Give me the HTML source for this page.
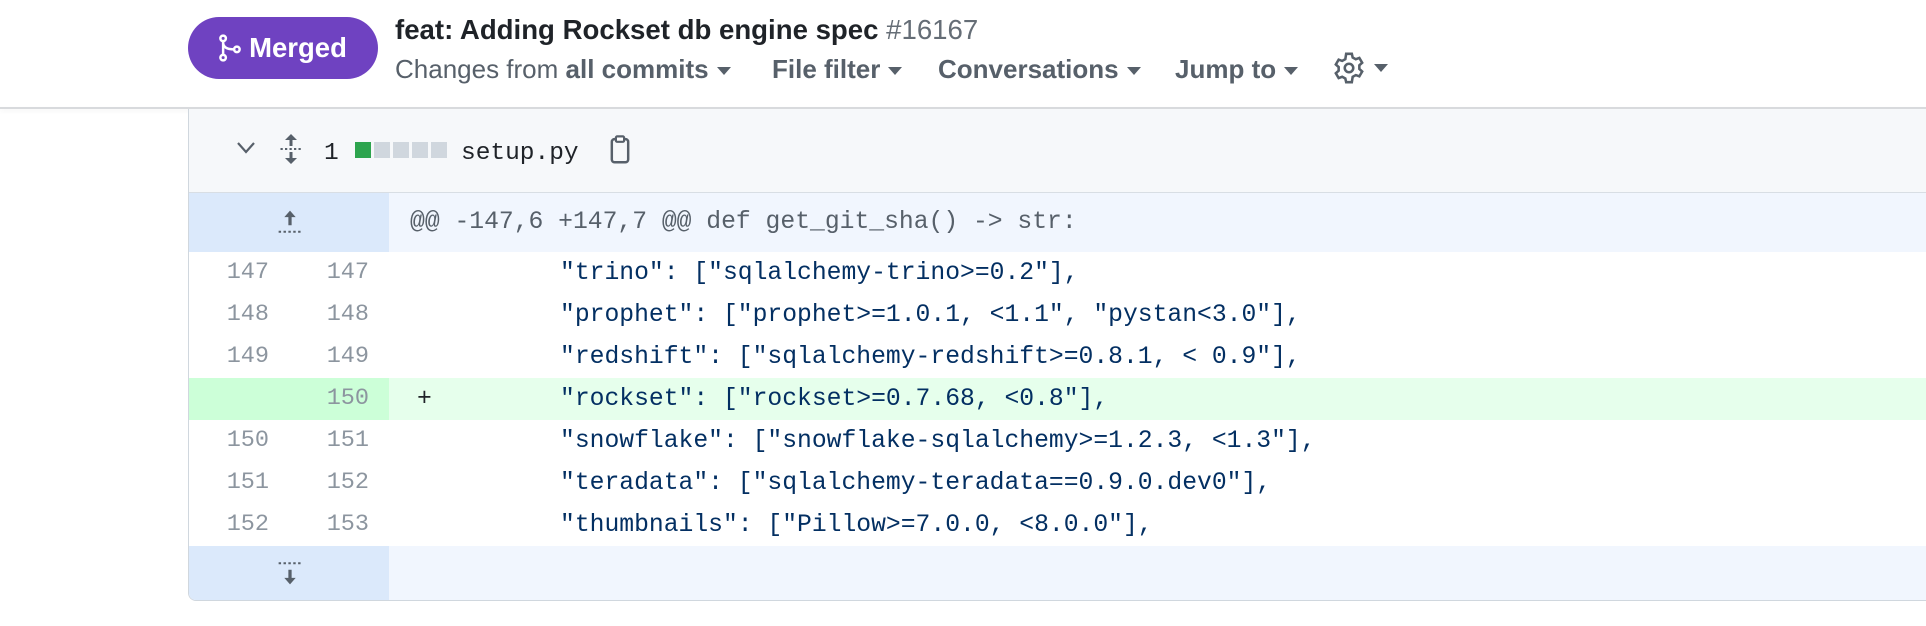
<!DOCTYPE html>
<html><head><meta charset="utf-8"><style>
*{margin:0;padding:0;box-sizing:border-box}
body{width:1926px;height:626px;background:#fff;position:relative;overflow:hidden;font-family:"Liberation Sans",sans-serif}
.a{position:absolute}
.pill{left:188px;top:17px;width:190px;height:62px;border-radius:31px;background:#6f42c1;color:#fff;font-size:27.5px;font-weight:bold;display:flex;align-items:center;justify-content:center;gap:8px}
.title{left:395px;top:14px;font-size:27.6px;font-weight:bold;color:#1f2328;white-space:nowrap}
.title span{font-weight:normal;color:#656d76}
.nav{top:54px;font-size:26px;color:#57606a;white-space:nowrap;font-weight:bold}
.nav .n{font-weight:normal}
.tri{display:inline-block;width:0;height:0;border-left:7px solid transparent;border-right:7px solid transparent;border-top:8px solid #57606a;margin-left:8px;vertical-align:middle}
.hdrline{left:0;top:107px;width:1926px;height:2px;background:#d8dadd;box-shadow:0 2px 4px rgba(0,0,0,.06)}
.box{left:188px;top:109px;width:1760px;height:492px;border:1.5px solid #d0d7de;border-top:none;border-radius:0 0 8px 8px;overflow:hidden;background:#fff}
.mono{font-family:"Liberation Mono",monospace;font-size:24.7px;white-space:pre}
.row{position:absolute;left:0;width:100%;height:42px;line-height:42px}
.ln{position:absolute;top:0;width:60px;text-align:right;color:#8c959f;font-size:23.5px}
.code{position:absolute;top:0;left:371px;color:#032f62}
</style></head><body>
<div class="a pill"><svg width="22" height="28" viewBox="0 0 16 20"><g fill="none" stroke="#fff" stroke-width="1.8"><circle cx="3" cy="3" r="2"/><circle cx="3" cy="17" r="2"/><circle cx="13" cy="11" r="2"/><path d="M3 5v10M3 6c0 4 4 5 8 5"/></g></svg>Merged</div>
<div class="a title">feat: Adding Rockset db engine spec <span>#16167</span></div>
<div class="a nav" style="left:395px"><span class="n">Changes from</span> all commits<span class="tri"></span></div>
<div class="a nav" style="left:772px">File filter<span class="tri"></span></div>
<div class="a nav" style="left:938px">Conversations<span class="tri"></span></div>
<div class="a nav" style="left:1175px">Jump to<span class="tri"></span></div>
<svg class="a" style="left:1332px;top:51px" width="34" height="34" viewBox="0 0 24 24"><path fill="none" stroke="#57606a" stroke-width="1.8" d="M10 2h4l.6 2.6 2.2 1.2 2.5-.9 2 3.4-2 1.8v2.6l2 1.8-2 3.4-2.5-.9-2.2 1.2L14 22h-4l-.6-2.6-2.2-1.2-2.5.9-2-3.4 2-1.8V11.3l-2-1.8 2-3.4 2.5.9 2.2-1.2z"/><circle cx="12" cy="12" r="3" fill="none" stroke="#57606a" stroke-width="1.8"/></svg>
<span class="a tri" style="left:1366px;top:64px"></span>
<div class="a hdrline"></div>
<div class="a box">
 <div class="row" style="top:0;height:84px;background:#f6f8fa;border-bottom:1.5px solid #d8dee4;font-family:'Liberation Mono',monospace;font-size:24.5px;color:#1f2328">
  <svg class="a" style="left:47px;top:32px" width="20" height="14" viewBox="0 0 20 14"><path d="M2 2l8 9 8-9" fill="none" stroke="#57606a" stroke-width="2.2"/></svg>
  <svg class="a" style="left:90px;top:23px" width="24" height="34" viewBox="0 0 16 22"><path d="M8 1l-4 4h3v4h2V5h3zM8 21l-4-4h3v-4h2v4h3z" fill="#57606a"/><path d="M1 11h14" stroke="#57606a" stroke-dasharray="1.5 1.5" stroke-width="1.3"/></svg>
  <span class="a" style="left:135px;top:24px">1</span>
  <span class="a" style="left:166px;top:33px;width:16px;height:16px;background:#2da44e"></span>
  <span class="a" style="left:185px;top:33px;width:16px;height:16px;background:#d0d7de"></span>
  <span class="a" style="left:204px;top:33px;width:16px;height:16px;background:#d0d7de"></span>
  <span class="a" style="left:223px;top:33px;width:16px;height:16px;background:#d0d7de"></span>
  <span class="a" style="left:242px;top:33px;width:16px;height:16px;background:#d0d7de"></span>
  <span class="a" style="left:272px;top:24px">setup.py</span>
  <svg class="a" style="left:420px;top:26px" width="22" height="30" viewBox="0 0 16 22"><rect x="2" y="3" width="12" height="17" rx="2" fill="none" stroke="#57606a" stroke-width="1.8"/><rect x="5" y="1" width="6" height="4" rx="1" fill="#fff" stroke="#57606a" stroke-width="1.6"/></svg>
 </div>
 <div class="row mono" style="top:84px;height:59px;line-height:59px;background:#f1f6fe">
  <div class="a" style="left:0;top:0;width:200px;height:59px;background:#dbe9fb"></div>
  <svg class="a" style="left:88px;top:14px" width="26" height="30" viewBox="0 0 16 18"><path d="M8 2l-3.5 4h2.5v5h2V6h2.5z" fill="#57606a"/><path d="M1 15h14" stroke="#57606a" stroke-dasharray="1.5 1.5" stroke-width="1.3"/></svg>
  <span class="a" style="left:221px;top:0;color:#57606a">@@ -147,6 +147,7 @@ def get_git_sha() -&gt; str:</span>
 </div>
 <div class="row mono" style="top:143px"><span class="ln" style="left:20px">147</span><span class="ln" style="left:120px">147</span><span class="code">"trino": ["sqlalchemy-trino&gt;=0.2"],</span></div>
 <div class="row mono" style="top:185px"><span class="ln" style="left:20px">148</span><span class="ln" style="left:120px">148</span><span class="code">"prophet": ["prophet&gt;=1.0.1, &lt;1.1", "pystan&lt;3.0"],</span></div>
 <div class="row mono" style="top:227px"><span class="ln" style="left:20px">149</span><span class="ln" style="left:120px">149</span><span class="code">"redshift": ["sqlalchemy-redshift&gt;=0.8.1, &lt; 0.9"],</span></div>
 <div class="row mono" style="top:269px;background:#e6ffec"><div class="a" style="left:0;top:0;width:200px;height:42px;background:#ccffd8"></div><span class="ln" style="left:120px">150</span><span class="a" style="left:228px;top:0;color:#1f2328">+</span><span class="code">"rockset": ["rockset&gt;=0.7.68, &lt;0.8"],</span></div>
 <div class="row mono" style="top:311px"><span class="ln" style="left:20px">150</span><span class="ln" style="left:120px">151</span><span class="code">"snowflake": ["snowflake-sqlalchemy&gt;=1.2.3, &lt;1.3"],</span></div>
 <div class="row mono" style="top:353px"><span class="ln" style="left:20px">151</span><span class="ln" style="left:120px">152</span><span class="code">"teradata": ["sqlalchemy-teradata==0.9.0.dev0"],</span></div>
 <div class="row mono" style="top:395px"><span class="ln" style="left:20px">152</span><span class="ln" style="left:120px">153</span><span class="code">"thumbnails": ["Pillow&gt;=7.0.0, &lt;8.0.0"],</span></div>
 <div class="row" style="top:437px;height:60px;background:#f1f6fe">
  <div class="a" style="left:0;top:0;width:200px;height:60px;background:#dbe9fb"></div>
  <svg class="a" style="left:88px;top:12px" width="26" height="30" viewBox="0 0 16 18"><path d="M1 3h14" stroke="#57606a" stroke-dasharray="1.5 1.5" stroke-width="1.3"/><path d="M8 16l-3.5-4h2.5V7h2v5h2.5z" fill="#57606a"/></svg>
 </div>
</div>
</body></html>
